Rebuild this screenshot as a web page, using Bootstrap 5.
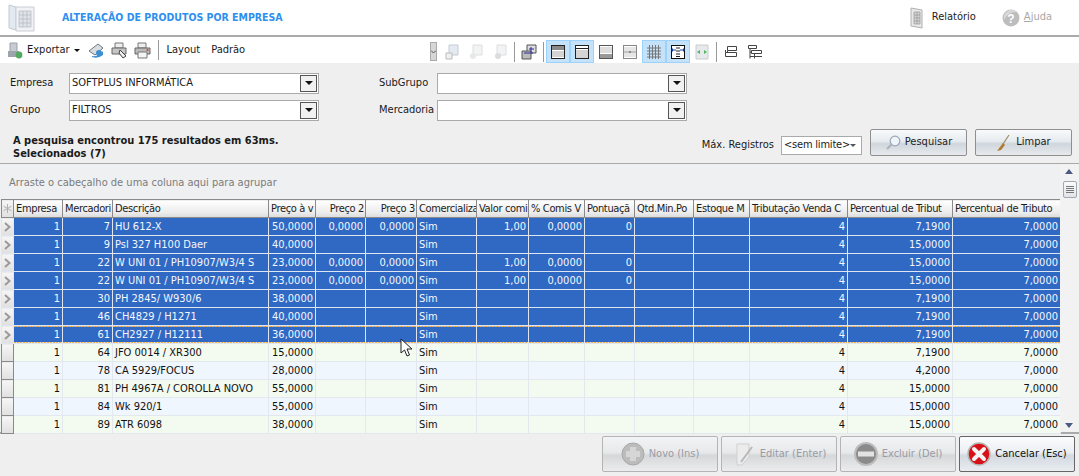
<!DOCTYPE html>
<html lang="pt">
<head>
<meta charset="UTF-8">
<meta name="viewport" content="width=device-width, initial-scale=1.0">
<title>Alteração de produtos por empresa</title>
<link href="https://cdn.jsdelivr.net/npm/bootstrap@5.3.0/dist/css/bootstrap.min.css" rel="stylesheet">
<style>
body { width:1079px; height:476px; overflow:hidden; font-family:"DejaVu Sans Condensed","Liberation Sans",Arial,sans-serif; font-size:11px; color:#1a1a1a; position:relative; background:#fff; }
.topo { height:37px; border-bottom:2px solid #aaa; padding:0 27px 0 8px; }
.topo-title { color:#2f8fee; font-weight:700; font-size:10.5px; margin-left:26px; }
.topo-link { color:#222; margin-right:26px; }
.topo-off { color:#a8a8a8; }
.barra { height:26px; padding-left:7px; }
.barra-sep { width:1px; height:20px; background:#999; }
.ico-bar { margin-left:6px; }
.sep-esq { margin:0 8px 0 7px; }
.txt-padrao { margin-left:11px; }
.barra-dir { margin-left:auto; margin-right:312px; align-self:flex-end; height:23px; }
.barra-dir .barra-sep { margin:0 2px; }
.grip { width:7px; height:19px; background:#d6d6d6; border:1px solid #aaa; margin-right:3px; display:flex; align-items:center; justify-content:center; }
.ico-on { width:24px; height:23px; background:#c4e3fb; border:1px solid #9dd2fa; display:flex; align-items:center; justify-content:center; }
.ico-off { width:24px; height:23px; display:flex; align-items:center; justify-content:center; }
.filtros { height:101px; background:#efefef; border-bottom:1px solid #aaa; position:relative; padding:7px 10px 0; }
.f-linha { height:27px; }
.f-label { width:59px; }
.f-label2 { width:58px; margin-left:60px; }
.combo { width:250px; height:21px; background:#fff; border:1px solid #aaa; padding-left:2px; margin-top:-1px; }
.combo-btn { width:17px; height:17px; border:1px solid #555; margin-right:1px; background:#f1f1f1; display:flex; align-items:center; justify-content:center; }
.seta { width:0; height:0; border-left:4px solid transparent; border-right:4px solid transparent; border-top:4px solid #111; }
.seta-mini { width:0; height:0; border-left:3px solid transparent; border-right:3px solid transparent; border-top:3px solid #111; }
.resumo { font-weight:700; line-height:13px; margin-top:10px; margin-left:3px; }
.pesq { right:7px; top:66px; }
.pesq-txt { margin-top:5px; white-space:nowrap; margin-right:-1px; }
.limite { width:81px; height:19px; border:1px solid #aaa; background:#fff; padding:0 2px; margin-top:5px; white-space:nowrap; letter-spacing:-.2px; }
.seta-p { width:0; height:0; border-left:3px solid transparent; border-right:3px solid transparent; border-top:3px solid #555; margin-right:4px; }
.btn-win { height:27px; border:1px solid #8f8f8f; border-radius:2px; background:linear-gradient(#f8fafb 0%,#e6ebef 45%,#cfd6dc 55%,#e7eaed 100%); font-size:11px; color:#222; padding:0; display:flex; align-items:center; justify-content:center; gap:4px; }
.btn-win.b-pesq { width:97px; }
.grade-wrap { height:270px; display:flex; background:#eff0f2; border-bottom:2px solid #aaa; }
.grade-main { width:1060px; padding-left:1px; }
.agrupar { height:35px; color:#7b7b7b; padding:11px 0 0 8px; }
.rolagem { width:19px; position:relative; background:#f2f2f3; }
.rolagem-up { position:absolute; left:5px; top:5px; border-left:4px solid transparent; border-right:4px solid transparent; border-bottom:5px solid #4a5a80; }
.rolagem-dn { position:absolute; left:5px; bottom:4px; border-left:4px solid transparent; border-right:4px solid transparent; border-top:5px solid #4a5a80; }
.rolagem-th { position:absolute; left:3px; top:17px; width:14px; height:17px; border:1px solid #a0a8b0; border-radius:2px; background:linear-gradient(#fafafa,#e2e4e7); display:flex; flex-direction:column; align-items:center; justify-content:center; gap:1px; }
.rolagem-th i { display:block; width:8px; height:1px; background:#777; }
.grade { table-layout:fixed; width:1059px; border-collapse:collapse; margin:0; font-size:11px; }
.grade th { height:18px; padding:0 1px 0 2px; font-weight:400; letter-spacing:-.35px; background:linear-gradient(#fff,#ececec 70%,#dcdcdc); border:1px solid #8a8a8a; border-width:1px 1px 1px 0; white-space:nowrap; overflow:hidden; line-height:16px; color:#1c1c1c; }
.grade td { height:18px; padding:0 2px; white-space:nowrap; overflow:hidden; line-height:16px; border-right:1px solid #e3e8ee; border-bottom:1px solid #e3e8ee; color:#111; }
.grade .num { text-align:right; }
.grade tr.sel td { background-color:#3069c4; color:#f4f7fc; border-color:#dfe6f2; }
.grade tr.foco td:not(.ind) { background-image:repeating-linear-gradient(90deg,#f2b050 0 2px,#8fa4c8 2px 3px),repeating-linear-gradient(90deg,#f2b050 0 2px,#e8e4d8 2px 3px); background-size:100% 1px,100% 1px; background-position:top,bottom; background-repeat:no-repeat; }
.grade tr.par td { background:#f3faf0; }
.grade tr.impar td { background:#f0f6fe; }
.grade td.ind, .grade th.ind { padding:0; background:linear-gradient(#f6f6f6,#e0e0e0) !important; border-right:1px solid #8a8a8a; border-left:1px solid #8a8a8a; border-bottom:1px solid #8a8a8a; text-align:center; color:#aaa; line-height:10px; }
.rodape { height:43px; background:#efefef; padding:2px 4px 0 0; gap:3px; }
.btn-acao { width:116px; height:36px; border:1px solid #b4b4b4; border-radius:2px; background:linear-gradient(#f2f3f4 0%,#e8e9ea 45%,#d5d8da 55%,#ececee 100%); color:#9a9ba6; font-size:11px; padding:0; display:flex; align-items:center; justify-content:center; gap:4px; }
.btn-acao:disabled { opacity:1; color:#9a9ba6; }
.btn-acao.ativo { color:#111; border-color:#666; background:linear-gradient(#fbfcfd 0%,#ebeff3 45%,#d2d9df 55%,#e9edf1 100%); }
.cursor { position:absolute; left:400px; top:338px; }
</style>
</head>
<body>

<!-- cabecalho -->
<div class="topo d-flex align-items-center">
    <svg width="28" height="30" viewBox="0 0 28 30">
        <path d="M1 2 L8 4 V27 L1 25Z" fill="#e3e9f0" stroke="#c3cad2"/>
        <path d="M8 4 H26 V28 H8Z" fill="#f0f2f5" stroke="#c9ced4"/>
        <path d="M11 8 H23 V24 H11Z M15 8 V24 M19 8 V24 M11 12 H23 M11 16 H23 M11 20 H23" fill="#dfe3e8" stroke="#b3b9c0" stroke-width=".7"/>
    </svg>
    <span class="topo-title">ALTERAÇÃO DE PRODUTOS POR EMPRESA</span>
    <div class="ms-auto d-flex align-items-center">
        <svg width="14" height="22" viewBox="0 0 14 22"><path d="M1 1 L12 3 V21 L1 19Z" fill="#e8e8e8" stroke="#b0b0b0"/><path d="M4 5 H10 V17 H4Z M4 8 H10 M4 11 H10 M4 14 H10 M7 5 V17" fill="#d4d4d4" stroke="#8c8c8c" stroke-width=".6"/></svg>
        <span class="topo-link ms-2">Relatório</span>
        <svg width="18" height="18" viewBox="0 0 18 18"><circle cx="9" cy="9" r="8.5" fill="#bdbdbd"/><path d="M2 11 A8 8 0 0 1 15 3 A12 12 0 0 0 2 11Z" fill="#d8d8d8"/><text x="9" y="13.5" font-size="12" font-weight="700" text-anchor="middle" fill="#fff" font-family="Liberation Sans">?</text></svg>
        <span class="topo-off ms-1"><u>A</u>juda</span>
    </div>
</div>

<!-- barra de ferramentas -->
<div class="barra d-flex align-items-center">
    <svg width="16" height="17" viewBox="0 0 16 17"><path d="M3 1 H10 V13 H3Z" fill="#c8ccd2" stroke="#9aa0a8"/><path d="M1 9 H12 V15 H1Z" fill="#9ea4ac"/><circle cx="12" cy="13" r="3.4" fill="#55a860"/></svg>
    <span class="ms-1">Exportar</span>
    <span class="seta-mini ms-1"></span>
    <svg class="ms-2" width="17" height="17" viewBox="0 0 17 17"><path d="M1 9 L10 2 L15 6 L7 13Z" fill="#d8dde2" stroke="#777"/><path d="M4 14 Q11 15 15 9 L15 13 Q10 17 4 15Z" fill="#3f8fd0"/><circle cx="11" cy="11" r="3" fill="#3f8fd0"/></svg>
    <svg class="ico-bar" width="17" height="17" viewBox="0 0 17 17"><path d="M4 1 H12 V6 H4Z" fill="#eee" stroke="#777"/><path d="M1 6 H15 V12 H1Z" fill="#c6c6c6" stroke="#666"/><path d="M9 8 L15 14 L12 16 L8 11Z" fill="#eee" stroke="#444"/></svg>
    <svg class="ico-bar" width="17" height="17" viewBox="0 0 17 17"><path d="M4 1 H12 V6 H4Z" fill="#eee" stroke="#777"/><path d="M1 6 H16 V12 H1Z" fill="#bbb" stroke="#666"/><path d="M4 10 H13 V16 H4Z" fill="#f4f4f4" stroke="#777"/><circle cx="13.5" cy="8" r="1" fill="#d33"/></svg>
    <span class="barra-sep sep-esq"></span>
    <span>Layout</span>
    <span class="txt-padrao">Padrão</span>

    <div class="barra-dir d-flex align-items-center">
        <span class="grip"><svg width="5" height="4" viewBox="0 0 5 4"><path d="M0 0.5 L2.5 3 L5 0.5" fill="none" stroke="#555"/></svg></span>
        <span class="ico-off"><svg width="14" height="16" viewBox="0 0 14 16"><path d="M4 1 H13 V11 H4Z" fill="#e4eaf0" stroke="#c4ccd4"/><path d="M1 9 H7 V15 H1Z" fill="#f0f0f0" stroke="#bbb"/></svg></span>
        <span class="ico-off"><svg width="14" height="16" viewBox="0 0 14 16"><path d="M4 1 H13 V11 H4Z" fill="#f1f3f5" stroke="#dedede"/><circle cx="4" cy="12" r="3" fill="#e8e8e8"/></svg></span>
        <span class="ico-off"><svg width="14" height="16" viewBox="0 0 14 16"><path d="M4 1 H13 V11 H4Z" fill="#f1f3f5" stroke="#dedede"/><circle cx="5" cy="12" r="3" fill="#dcdcdc"/></svg></span>
        <span class="barra-sep"></span>
        <span class="ico-off"><svg width="16" height="16" viewBox="0 0 16 16"><path d="M6 1 H15 V9 H6Z" fill="#ddd" stroke="#555"/><path d="M1 7 H10 V15 H1Z" fill="#bbb" stroke="#555"/><path d="M3 9 H12 M10 3 V8 M8 5 H13" stroke="#2a2a9a" fill="none"/></svg></span>
        <span class="barra-sep"></span>
        <span class="ico-on"><svg width="16" height="16" viewBox="0 0 16 16"><rect x="1.5" y="1.5" width="13" height="13" fill="#fff" stroke="#222"/><rect x="2" y="2" width="12" height="4" fill="#8a8a8a"/><path d="M2 8 H14 M2 10 H14 M2 12 H14" stroke="#aaa"/></svg></span>
        <span class="ico-on"><svg width="16" height="16" viewBox="0 0 16 16"><rect x="1.5" y="1.5" width="13" height="13" fill="#fff" stroke="#222"/><path d="M2 4.5 H14" stroke="#222"/><path d="M2 7 H14 M2 9 H14 M2 11 H14 M2 13 H14" stroke="#aaa"/></svg></span>
        <span class="ico-off"><svg width="16" height="16" viewBox="0 0 16 16"><rect x="1.5" y="1.5" width="13" height="13" fill="#fff" stroke="#555"/><path d="M2 4 H14 M2 6 H14 M2 8 H14" stroke="#bbb"/><rect x="2" y="10" width="12" height="4" fill="#999"/></svg></span>
        <span class="ico-off"><svg width="16" height="16" viewBox="0 0 16 16"><rect x="1.5" y="1.5" width="13" height="13" fill="#fff" stroke="#888"/><path d="M2 4 H14 M2 6 H14 M2 10 H14 M2 12 H14" stroke="#ccc"/><path d="M2 8 H14" stroke="#888"/><path d="M7 7 H9 V9 H7Z" fill="#888"/></svg></span>
        <span class="ico-on"><svg width="16" height="16" viewBox="0 0 16 16"><path d="M1 4 H15 M1 7 H15 M1 10 H15 M1 13 H15 M3.5 1 V15 M6.5 1 V15 M9.5 1 V15 M12.5 1 V15" stroke="#777" fill="none"/></svg></span>
        <span class="ico-on"><svg width="16" height="16" viewBox="0 0 16 16"><rect x="1.5" y="1.5" width="13" height="13" fill="#fff" stroke="#111"/><path d="M1 6 L3 4 V8Z M15 6 L13 4 V8Z" fill="#1a3f9a"/><path d="M3 6 H6 M10 6 H13" stroke="#1a3f9a"/><path d="M6 4 H10 M6 7 H10 M6 10 H10 M6 12.5 H10" stroke="#222"/></svg></span>
        <span class="ico-off"><svg width="14" height="16" viewBox="0 0 14 16"><path d="M1 1 H13 V15 H1Z" fill="#e6eaec" stroke="#c8ccd0"/><path d="M2 8 L5 6 V10Z M12 8 L9 6 V10Z" fill="#52b560"/></svg></span>
        <span class="barra-sep"></span>
        <span class="ico-off"><svg width="14" height="14" viewBox="0 0 14 14"><path d="M3.5 1.5 H12.5 V5.5 H3.5Z M1.5 7.5 H12.5 V11.5 H1.5Z M3.5 5.5 V7.5 M1.5 5 V7.5" fill="#fff" stroke="#444"/></svg></span>
        <span class="ico-off"><svg width="16" height="16" viewBox="0 0 16 16"><path d="M1.5 1.5 H9.5 V4.5 H1.5Z M4.5 6.5 H14.5 V9.5 H4.5Z M3 4.5 V14.5 M3 8 H4.5 M3 12.5 H15 M7.5 9.5 V14.5" fill="none" stroke="#444"/></svg></span>
    </div>
</div>

<div class="filtros">
    <div class="f-linha d-flex align-items-center">
        <span class="f-label">Empresa</span>
        <div class="combo d-flex align-items-center"><span class="flex-grow-1">SOFTPLUS INFORMÁTICA</span><span class="combo-btn"><span class="seta"></span></span></div>
        <span class="f-label2">SubGrupo</span>
        <div class="combo d-flex align-items-center"><span class="flex-grow-1"></span><span class="combo-btn"><span class="seta"></span></span></div>
    </div>
    <div class="f-linha d-flex align-items-center">
        <span class="f-label">Grupo</span>
        <div class="combo d-flex align-items-center"><span class="flex-grow-1">FILTROS</span><span class="combo-btn"><span class="seta"></span></span></div>
        <span class="f-label2">Mercadoria</span>
        <div class="combo d-flex align-items-center"><span class="flex-grow-1"></span><span class="combo-btn"><span class="seta"></span></span></div>
    </div>
    <div class="resumo">A pesquisa encontrou 175 resultados em 63ms.<br>Selecionados (7)</div>
    <div class="pesq position-absolute d-flex align-items-center gap-2">
        <span class="pesq-txt">Máx. Registros</span>
        <div class="limite d-flex align-items-center justify-content-between"><span>&lt;sem limite&gt;</span><span class="seta-p"></span></div>
        <button class="btn-win b-pesq" type="button">
            <svg width="16" height="16" viewBox="0 0 16 16"><circle cx="10" cy="6" r="4.8" fill="#eef4fa" stroke="#9aa7b5" stroke-width="1.2"/><path d="M6.5 9.5 L2 14" stroke="#a9b2bb" stroke-width="2"/></svg>
            Pesquisar</button>
        <button class="btn-win b-pesq" type="button">
            <svg width="16" height="18" viewBox="0 0 16 18"><path d="M13 1 L7 10" stroke="#a08a60" stroke-width="1.2"/><path d="M7 9 L9 11 L5 16 L1 17Z" fill="#b27a30"/></svg>
            Limpar</button>
    </div>
</div>

<div class="grade-wrap">
    <div class="grade-main">
        <div class="agrupar">Arraste o cabeçalho de uma coluna aqui para agrupar</div>
        <table class="grade" id="grade"></table>
    </div>
    <div class="rolagem">
        <span class="rolagem-up"></span>
        <span class="rolagem-th"><i></i><i></i><i></i><i></i></span>
        <span class="rolagem-dn"></span>
    </div>
</div>

<div class="rodape d-flex justify-content-end">
    <button class="btn-acao" type="button" disabled>
        <svg width="24" height="24" viewBox="0 0 24 24"><circle cx="12" cy="12" r="11" fill="#bcbcbc" stroke="#a8a8a8"/><path d="M9 5 H15 V9 H19 V15 H15 V19 H9 V15 H5 V9 H9Z" fill="#d6d6d6"/></svg>
        Novo (Ins)</button>
    <button class="btn-acao" type="button" disabled>
        <svg width="24" height="26" viewBox="0 0 24 26"><path d="M5 3 H17 V16 L10 24 H5Z" fill="#ececec" stroke="#cfcfcf"/><path d="M20 6 L9 21" stroke="#b8b8b8" stroke-width="2"/></svg>
        Editar (Enter)</button>
    <button class="btn-acao" type="button" disabled>
        <svg width="24" height="24" viewBox="0 0 24 24"><circle cx="12" cy="12" r="11" fill="#8b8b8b" stroke="#bdbdbd" stroke-width="2"/><path d="M4 9.5 H20 V14.5 H4Z" fill="#e2e2e2"/></svg>
        Excluir (Del)</button>
    <button class="btn-acao ativo" type="button">
        <svg width="24" height="24" viewBox="0 0 24 24"><circle cx="12" cy="12" r="11" fill="#d81018" stroke="#b7b7b7" stroke-width="1.5"/><path d="M7 7 L17 17 M17 7 L7 17" stroke="#f4f4f4" stroke-width="4" stroke-linecap="round"/></svg>
        Cancelar (Esc)</button>
</div>

<svg class="cursor" width="14" height="20" viewBox="0 0 14 20"><path d="M1 1 V15 L4.5 12 L7 18 L9.5 17 L7 11 L12 11Z" fill="#fff" stroke="#222"/></svg>

<script>
    // colunas da grade: titulo visivel, largura, alinhamento
    const colunas = [
        ['', 12, ''], ['Empresa', 49, ''], ['Mercadori', 50, ''], ['Descrição', 156, ''], ['Preço à v', 47, ''],
        ['Preço 2', 50, 'num'], ['Preço 3', 51, 'num'], ['Comercializa', 60, ''], ['Valor comi', 52, ''],
        ['% Comis V', 56, ''], ['Pontuaçã', 50, ''], ['Qtd.Min.Po', 59, ''], ['Estoque M', 56, ''],
        ['Tributação Venda C', 98, ''], ['Percentual de Tribut', 105, ''], ['Percentual de Tributo', 108, '']
    ];
    const alinhado = [0, 1, 1, 0, 1, 1, 1, 0, 1, 1, 1, 0, 0, 1, 1, 1];
    const linhas = [
        ['1','7','HU 612-X','50,0000','0,0000','0,0000','Sim','1,00','0,0000','0','','','4','7,1900','7,0000'],
        ['1','9','Psl 327 H100 Daer','40,0000','','','Sim','','','','','','4','15,0000','7,0000'],
        ['1','22','W UNI 01 / PH10907/W3/4 S','23,0000','0,0000','0,0000','Sim','1,00','0,0000','0','','','4','15,0000','7,0000'],
        ['1','22','W UNI 01 / PH10907/W3/4 S','23,0000','0,0000','0,0000','Sim','1,00','0,0000','0','','','4','15,0000','7,0000'],
        ['1','30','PH 2845/ W930/6','38,0000','','','Sim','','','','','','4','7,1900','7,0000'],
        ['1','46','CH4829 / H1271','40,0000','','','Sim','','','','','','4','7,1900','7,0000'],
        ['1','61','CH2927 / H12111','36,0000','','','Sim','','','','','','4','7,1900','7,0000'],
        ['1','64','JFO 0014 / XR300','15,0000','','','Sim','','','','','','4','7,1900','7,0000'],
        ['1','78','CA 5929/FOCUS','28,0000','','','Sim','','','','','','4','4,2000','7,0000'],
        ['1','81','PH 4967A / COROLLA NOVO','55,0000','','','Sim','','','','','','4','15,0000','7,0000'],
        ['1','84','Wk 920/1','55,0000','','','Sim','','','','','','4','15,0000','7,0000'],
        ['1','89','ATR 6098','38,0000','','','Sim','','','','','','4','15,0000','7,0000']
    ];
    const seta = '<svg width="7" height="10" viewBox="0 0 7 10"><path d="M1 1 L5.5 5 L1 9" fill="none" stroke="#9a9a9a" stroke-width="2"/></svg>';
    const asterisco = '<svg width="9" height="9" viewBox="0 0 9 9"><path d="M4.5 0 V9 M0.5 2.2 L8.5 6.8 M8.5 2.2 L0.5 6.8" stroke="#b0b0b0"/></svg>';
    let html = '<colgroup>' + colunas.map(c => `<col style="width:${c[1]}px">`).join('') + '</colgroup><thead><tr>';
    colunas.forEach((c, i) => {
        html += i === 0 ? `<th class="ind">${asterisco}</th>` : `<th class="${c[2]}">${c[0]}</th>`;
    });
    html += '</tr></thead><tbody>';
    linhas.forEach((l, n) => {
        const cl = n < 7 ? 'sel' + (n === 6 ? ' foco' : '') : (n % 2 ? 'par' : 'impar');
        html += `<tr class="${cl}"><td class="ind">${n < 7 ? seta : ''}</td>`;
        l.forEach((v, i) => { html += `<td class="${alinhado[i + 1] ? 'num' : ''}">${v}</td>`; });
        html += '</tr>';
    });
    document.getElementById('grade').innerHTML = html + '</tbody>';
</script>
</body>
</html>
